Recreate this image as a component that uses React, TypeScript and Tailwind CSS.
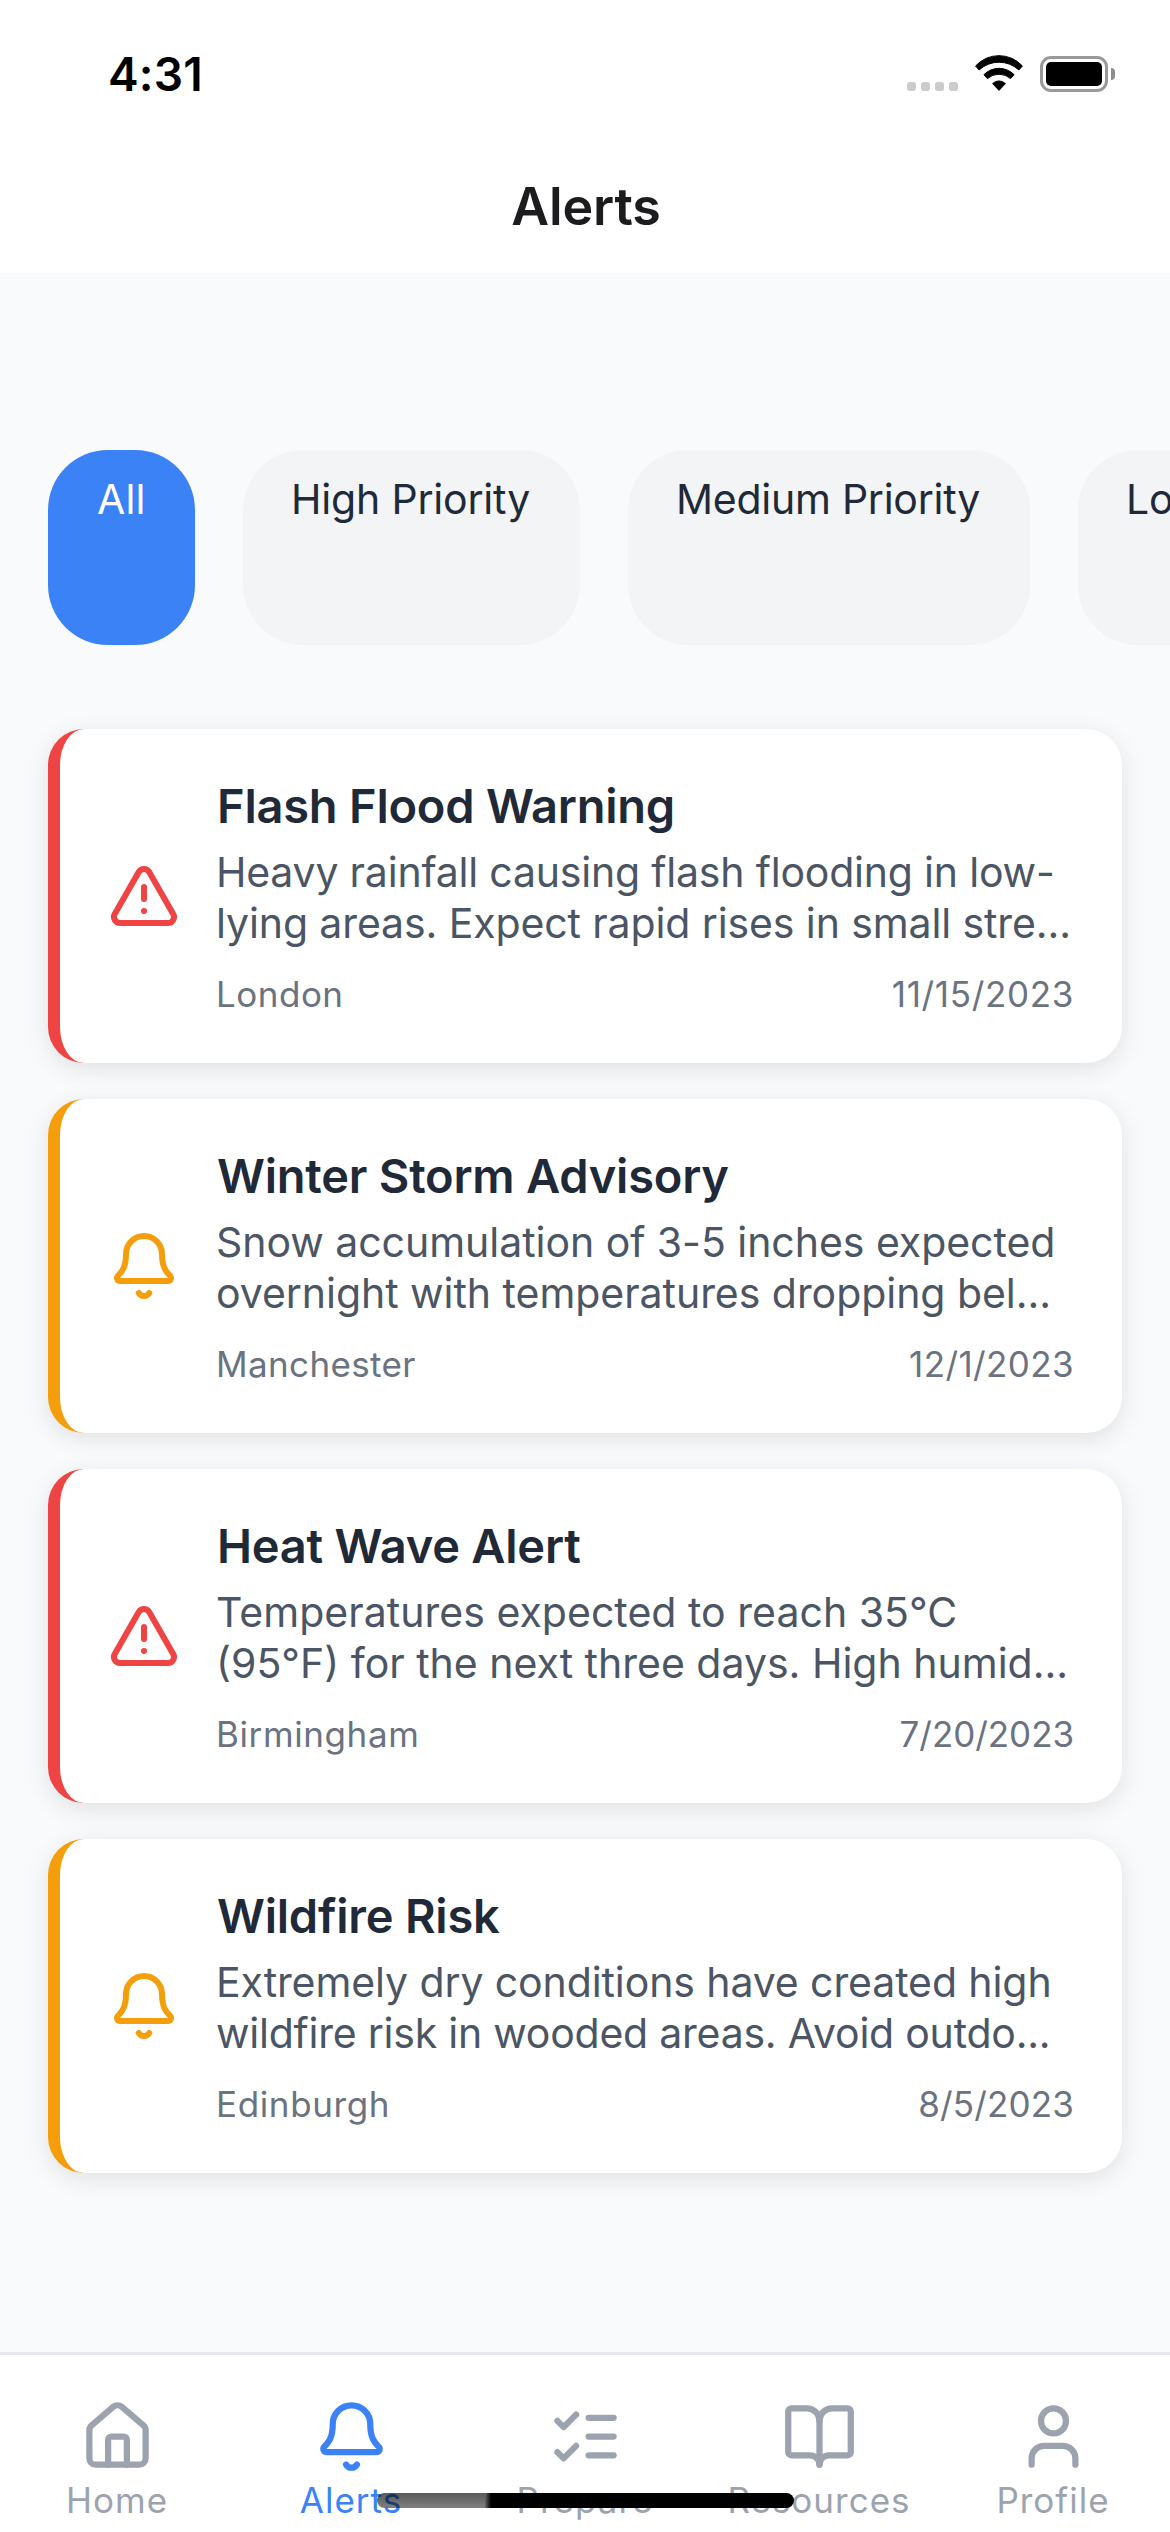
import React from "react";

const WarningIcon = () => (
  <svg className="size-[72px] shrink-0" viewBox="0 0 24 24" fill="none" stroke="currentColor" strokeWidth="2" strokeLinecap="round" strokeLinejoin="round">
    <path d="m21.73 18-8-14a2 2 0 0 0-3.48 0l-8 14A2 2 0 0 0 4 21h16a2 2 0 0 0 1.73-3" />
    <path d="M12 9v4" />
    <path d="M12 17h.01" />
  </svg>
);

const BellPaths = () => (
  <>
    <path d="M10.268 21a2 2 0 0 0 3.464 0" />
    <path d="M3.262 15.326A1 1 0 0 0 4 17h16a1 1 0 0 0 .74-1.673C19.41 13.956 18 12.499 18 8A6 6 0 0 0 6 8c0 4.499-1.411 5.956-2.738 7.326" />
  </>
);

const BellIcon = () => (
  <svg className="size-[72px] shrink-0" viewBox="0 0 24 24" fill="none" stroke="currentColor" strokeWidth="2" strokeLinecap="round" strokeLinejoin="round">
    <BellPaths />
  </svg>
);

const chips = [
  { label: "All", style: "w-[147px] bg-[#3b82f6] pl-[49px] text-white tracking-[0.2px]" },
  { label: "High Priority", style: "w-[337px] bg-[#f3f4f6] pl-[48px] text-[#1f2937] tracking-[-0.18px]" },
  { label: "Medium Priority", style: "w-[402px] bg-[#f3f4f6] pl-[48px] text-[#1f2937] tracking-[-0.25px]" },
  { label: "Low Priority", style: "w-[330px] bg-[#f3f4f6] pl-[48px] text-[#1f2937] tracking-[-0.18px]" },
];

const alerts = [
  {
    title: "Flash Flood Warning",
    lines: [
      { text: "Heavy rainfall causing flash flooding in low-", tracking: "tracking-[-0.2px]" },
      { text: "lying areas. Expect rapid rises in small stre...", tracking: "tracking-[-0.11px]" },
    ],
    city: "London",
    cityTracking: "tracking-[0.5px]",
    date: "11/15/2023",
    dateTracking: "tracking-[0.66px]",
    high: true,
  },
  {
    title: "Winter Storm Advisory",
    lines: [
      { text: "Snow accumulation of 3-5 inches expected", tracking: "tracking-[-0.04px]" },
      { text: "overnight with temperatures dropping bel...", tracking: "tracking-[-0.04px]" },
    ],
    city: "Manchester",
    cityTracking: "tracking-[0.37px]",
    date: "12/1/2023",
    dateTracking: "tracking-[0.39px]",
    high: false,
  },
  {
    title: "Heat Wave Alert",
    lines: [
      { text: "Temperatures expected to reach 35°C", tracking: "tracking-[0.03px]" },
      { text: "(95°F) for the next three days. High humid...", tracking: "tracking-[0px]" },
    ],
    city: "Birmingham",
    cityTracking: "tracking-[0.6px]",
    date: "7/20/2023",
    dateTracking: "tracking-[-0.05px]",
    high: true,
  },
  {
    title: "Wildfire Risk",
    lines: [
      { text: "Extremely dry conditions have created high", tracking: "tracking-[-0.1px]" },
      { text: "wildfire risk in wooded areas. Avoid outdo...", tracking: "tracking-[-0.23px]" },
    ],
    city: "Edinburgh",
    cityTracking: "tracking-[0.63px]",
    date: "8/5/2023",
    dateTracking: "tracking-[0.15px]",
    high: false,
  },
];

const tabs = [
  {
    label: "Home",
    active: false,
    icon: (
      <>
        <path d="M15 21v-8a1 1 0 0 0-1-1h-4a1 1 0 0 0-1 1v8" />
        <path d="M3 10a2 2 0 0 1 .709-1.528l7-5.999a2 2 0 0 1 2.582 0l7 5.999A2 2 0 0 1 21 10v9a2 2 0 0 1-2 2H5a2 2 0 0 1-2-2z" />
      </>
    ),
  },
  { label: "Alerts", active: true, icon: <BellPaths /> },
  {
    label: "Prepare",
    active: false,
    icon: (
      <>
        <path d="m3 17 2 2 4-4" />
        <path d="m3 7 2 2 4-4" />
        <path d="M13 6h8" />
        <path d="M13 12h8" />
        <path d="M13 18h8" />
      </>
    ),
  },
  {
    label: "Resources",
    active: false,
    icon: (
      <>
        <path d="M12 7v14" />
        <path d="M3 18a1 1 0 0 1-1-1V4a1 1 0 0 1 1-1h5a4 4 0 0 1 4 4 4 4 0 0 1 4-4h5a1 1 0 0 1 1 1v13a1 1 0 0 1-1 1h-6a3 3 0 0 0-3 3 3 3 0 0 0-3-3z" />
      </>
    ),
  },
  {
    label: "Profile",
    active: false,
    icon: (
      <>
        <path d="M19 21v-2a4 4 0 0 0-4-4H9a4 4 0 0 0-4 4v2" />
        <circle cx="12" cy="7" r="4" />
      </>
    ),
  },
];

function StatusBar() {
  return (
    <div className="flex h-[147px] items-start justify-between pl-[108px] pr-[55px]">
      <div className="pt-[44px] text-[46px] font-semibold leading-[60px] tracking-[0.2px] text-black">4:31</div>
      <div className="flex pt-[54px]">
        <div className="mr-[16px] flex gap-[5px] pt-[28px]">
          {[0, 1, 2, 3].map((n) => (
            <span key={n} className="h-[9px] w-[9px] rounded-[3px] bg-[#cbcbcb]" />
          ))}
        </div>
        <svg className="mr-[16px] h-[38px] w-[50px]" viewBox="0 0 50 38" fill="black" stroke="black" strokeWidth="1" strokeLinejoin="round">
          <path d="M1.6 12A31.6 31.6 0 0 1 48.4 12L44.9 16A29.3 29.3 0 0 0 5.1 16Z" />
          <path d="M9.9 20.7A21.1 21.1 0 0 1 40.1 20.7L36.6 24.6A17.6 17.6 0 0 0 13.4 24.6Z" />
          <path d="M18.6 29.6A9 9 0 0 1 31.4 29.6L25 36.4Z" />
        </svg>
        <div className="mt-[2px] flex h-[36px] items-center">
          <div className="h-[36px] w-[68px] rounded-[11px] border-[3px] border-[#999999] p-[3px]">
            <div className="h-full w-full rounded-[5px] bg-black" />
          </div>
          <div className="ml-[3px] h-[12px] w-[4px] rounded-r-full bg-[#8c8c8c]" />
        </div>
      </div>
    </div>
  );
}

export default function App() {
  return (
    <div className="relative flex h-[2532px] w-[1170px] flex-col overflow-hidden bg-[#f9fafc] font-['Inter',sans-serif]">
      <header className="h-[273px] shrink-0 bg-white">
        <StatusBar />
        <h1 className="pl-[2px] text-center text-[52px] font-semibold leading-[120px] tracking-[-0.1px] text-[#1c1c1e]">Alerts</h1>
      </header>

      <div className="mt-[177px] flex h-[195px] shrink-0 gap-[48px] pl-[48px]">
        {chips.map((c) => (
          <div key={c.label} className={`shrink-0 whitespace-nowrap rounded-[60px] pt-[24px] text-[41px] leading-[51px] ${c.style}`}>
            {c.label}
          </div>
        ))}
      </div>

      <main className="mt-[84px] flex flex-col gap-[36px] px-[48px]">
        {alerts.map((a) => (
          <article
            key={a.title}
            className={`flex h-[334px] items-center rounded-[36px] border-l-[12px] bg-white px-[48px] shadow-[0_6px_24px_rgba(0,0,0,0.1)] ${a.high ? "border-[#ef4444] text-[#ef4444]" : "border-[#f59e0b] text-[#f59e0b]"}`}
          >
            {a.high ? <WarningIcon /> : <BellIcon />}
            <div className="ml-[36px] flex-1 self-start whitespace-nowrap pt-[48px]">
              <h2 className="pl-px text-[47px] font-semibold leading-[57px] tracking-[-0.23px] text-[#1f2937]">{a.title}</h2>
              <div className="mt-[13px] text-[41px] leading-[51px] text-[#4b5563]">
                {a.lines.map((l) => (
                  <p key={l.text} className={l.tracking}>
                    {l.text}
                  </p>
                ))}
              </div>
              <div className="mt-[24px] flex justify-between text-[35px] leading-[43px] text-[#6b7280]">
                <span className={a.cityTracking}>{a.city}</span>
                <span className={a.dateTracking}>{a.date}</span>
              </div>
            </div>
          </article>
        ))}
      </main>

      <nav className="mt-auto grid h-[180px] shrink-0 grid-cols-5 border-t-[3px] border-[#e5e7eb] bg-white">
        {tabs.map((t) => (
          <div key={t.label} className={`flex flex-col items-center pt-[44px] ${t.active ? "text-[#3b82f6]" : "text-[#9ca3af]"}`}>
            <svg className="size-[75px] shrink-0" viewBox="0 0 24 24" fill="none" stroke="currentColor" strokeWidth="2" strokeLinecap="round" strokeLinejoin="round">
              {t.icon}
            </svg>
            <span className="mt-[5px] text-[35px] leading-[43px] tracking-[1px]">{t.label}</span>
          </div>
        ))}
      </nav>

      <div className="absolute left-[377px] top-[2493px] flex h-[15px] w-[417px] overflow-hidden rounded-full">
        <div className="w-[108px] bg-linear-to-b from-black/65 to-black/50" />
        <div className="w-[6px] bg-linear-to-r from-black/60 to-black" />
        <div className="flex-1 bg-black" />
      </div>
    </div>
  );
}
